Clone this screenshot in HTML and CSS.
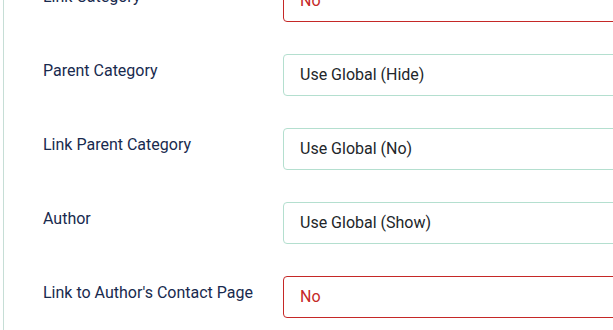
FILE: index.html
```html
<!DOCTYPE html>
<html lang="en">
  <head>
    <meta charset="UTF-8" />
    <meta name="viewport" content="width=device-width, initial-scale=1.0" />
    <title>Options</title>
    <link rel="stylesheet" href="styles.css">
  </head>
  <body>
    <div class="panel">
      <div class="fields">
        <div class="field">
          <label>Link Category</label>
          <div class="control invalid">No</div>
        </div>
        <div class="field">
          <label>Parent Category</label>
          <div class="control valid">Use Global (Hide)</div>
        </div>
        <div class="field">
          <label>Link Parent Category</label>
          <div class="control valid">Use Global (No)</div>
        </div>
        <div class="field">
          <label>Author</label>
          <div class="control valid">Use Global (Show)</div>
        </div>
        <div class="field">
          <label>Link to Author's Contact Page</label>
          <div class="control invalid">No</div>
        </div>
      </div>
    </div>
  </body>
</html>
```

FILE: styles.css
```css
* {
  margin: 0;
  padding: 0;
  box-sizing: border-box;
  font-family: Roboto, "Noto Sans", sans-serif;
}
body {
  background: #fff;
  overflow: hidden;
  width: 613px;
  height: 330px;
}

.panel {
  margin-left: 3px;
  border-left: 1px solid #c6ded6;
  min-height: 400px;
  padding-left: 39px;
}
.fields {
  margin-top: -20px;
}
.field {
  display: flex;
  align-items: flex-start;
  margin-bottom: 32px;
}
.field label {
  width: 240px;
  flex-shrink: 0;
  font-size: 16px;
  line-height: 24px;
  color: #182a4e;
  padding-top: 5px;
}
.control {
  width: 420px;
  flex-shrink: 0;
  height: 42px;
  border: 1px solid #ccc;
  border-radius: 4px;
  padding: 0 16px;
  font-size: 16px;
  line-height: 40px;
  color: #22262a;
}
.control.valid {
  border-color: #b4dfcf;
}
.control.invalid {
  border-color: #c52827;
  color: #c52827;
}
```
